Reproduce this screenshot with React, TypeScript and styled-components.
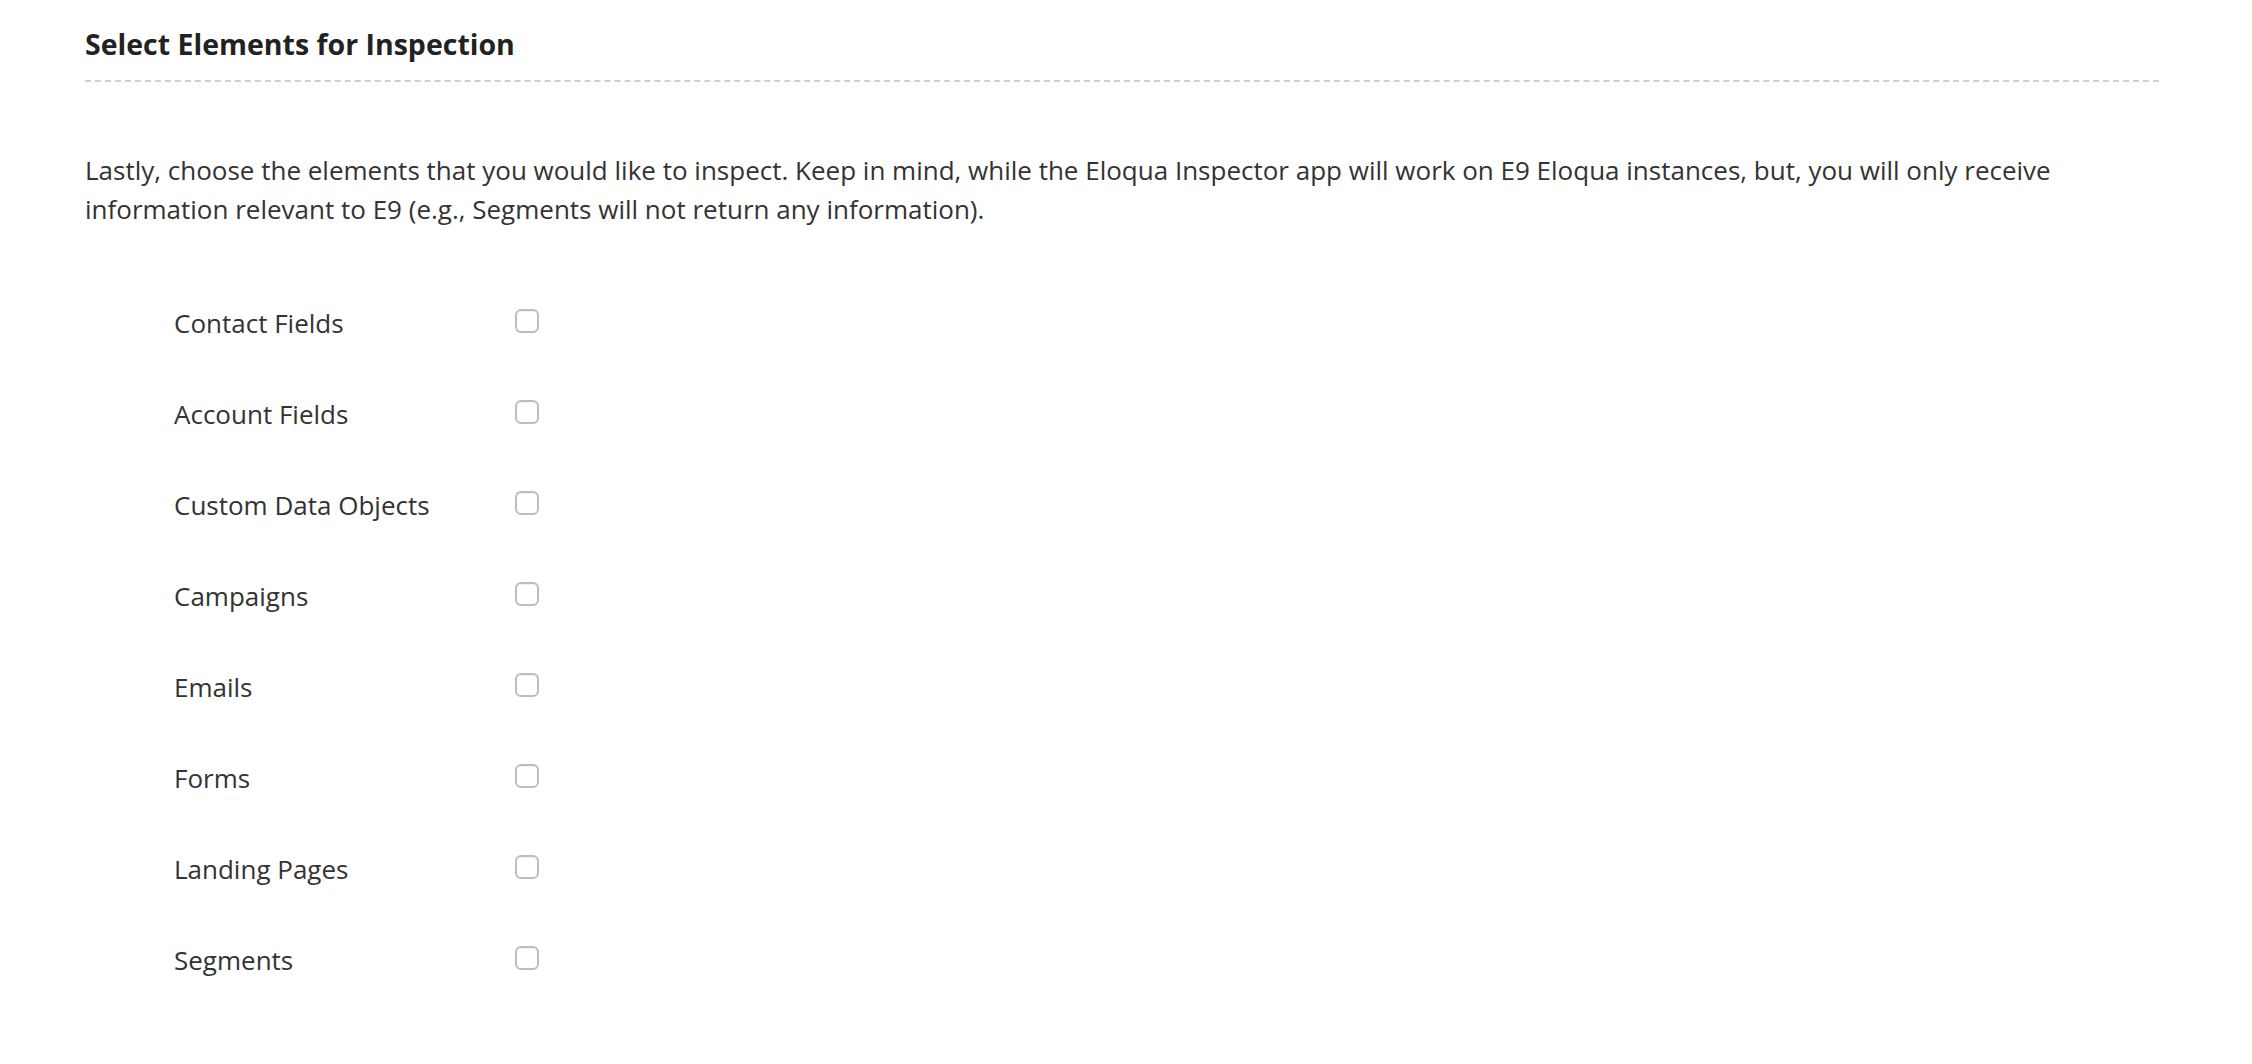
import React, { useState } from 'react';
import styled, { createGlobalStyle } from 'styled-components';

const GlobalStyle = createGlobalStyle`
  html, body {
    margin: 0;
    padding: 0;
    background: #ffffff;
  }
  body {
    font-family: "Open Sans", "Liberation Sans", Arial, sans-serif;
    color: #333333;
  }
`;

const Page = styled.div`
  padding: 24px 93px 40px 85px;
`;

const SectionTitle = styled.h2`
  margin: 0;
  padding-bottom: 16px;
  font-size: 28.5px;
  line-height: 40px;
  font-weight: 700;
  color: #222222;
  border-bottom: 2px dashed #cfcfcf;
`;

const Intro = styled.p`
  margin: 69px 0 0;
  font-size: 26px;
  line-height: 39px;
  color: #333333;
`;

const OptionList = styled.ul`
  list-style: none;
  margin: 74px 0 0;
  padding: 0 0 0 89px;
  display: flex;
  flex-direction: column;
  gap: 51px;
`;

const OptionRow = styled.li`
  display: flex;
  align-items: flex-start;
`;

const OptionLabel = styled.label`
  width: 341px;
  font-size: 26px;
  line-height: 40px;
  color: #333333;
  cursor: pointer;
`;

const CheckBox = styled.input`
  appearance: none;
  -webkit-appearance: none;
  margin: 6px 0 0;
  width: 24px;
  height: 24px;
  box-sizing: border-box;
  border: 2px solid #bdbdbd;
  border-radius: 6px;
  background: #ffffff;
  box-shadow: inset 0 1px 1px rgba(0, 0, 0, 0.06);
  cursor: pointer;

  &:checked {
    background: #3b8ee8;
    border-color: #2f7ad0;
  }
`;

const elements = [
  'Contact Fields',
  'Account Fields',
  'Custom Data Objects',
  'Campaigns',
  'Emails',
  'Forms',
  'Landing Pages',
  'Segments',
];

const App: React.FC = () => {
  const [selected, setSelected] = useState<Record<string, boolean>>({});

  const handleToggle = (name: string) => {
    setSelected((prev) => ({ ...prev, [name]: !prev[name] }));
  };

  return (
    <Page>
      <GlobalStyle />
      <SectionTitle>Select Elements for Inspection</SectionTitle>
      <Intro>
        Lastly, choose the elements that you would like to inspect. Keep in mind, while the Eloqua
        Inspector app will work on E9 Eloqua instances, but, you will only receive information
        relevant to E9 (e.g., Segments will not return any information).
      </Intro>
      <OptionList>
        {elements.map((name, i) => (
          <OptionRow key={name}>
            <OptionLabel htmlFor={`element-${i}`}>{name}</OptionLabel>
            <CheckBox
              id={`element-${i}`}
              type="checkbox"
              checked={!!selected[name]}
              onChange={() => handleToggle(name)}
            />
          </OptionRow>
        ))}
      </OptionList>
    </Page>
  );
};

export default App;
